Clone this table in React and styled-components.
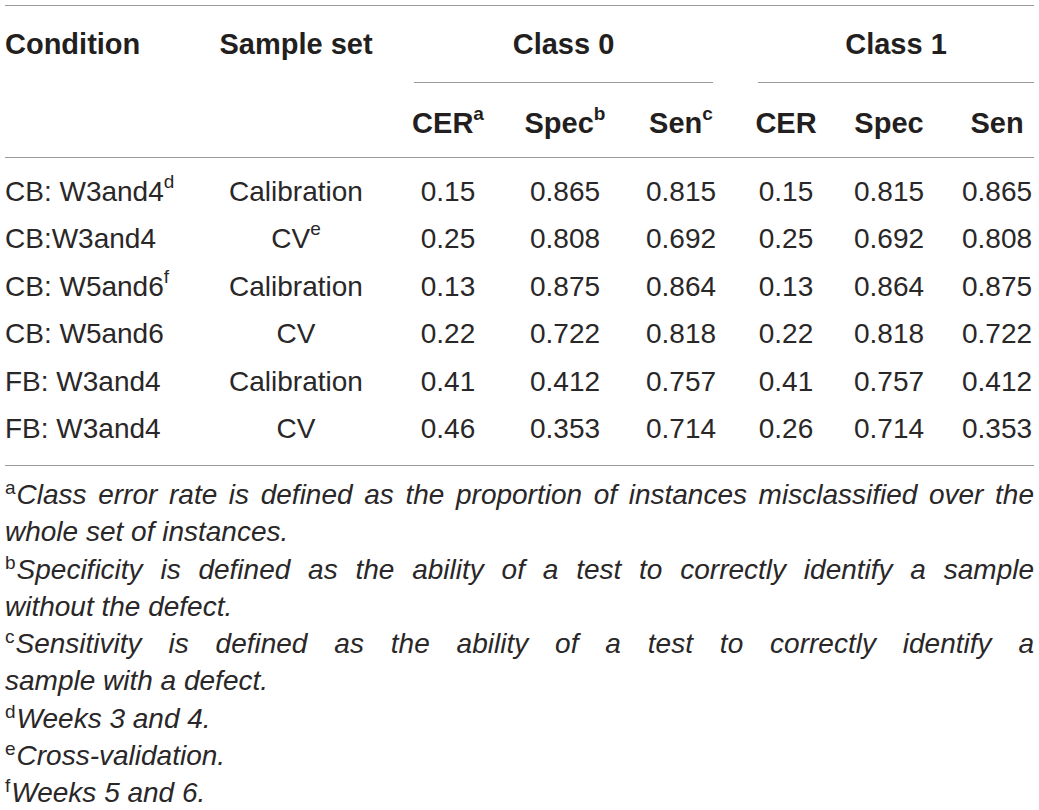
import React from "react";
import styled, { createGlobalStyle } from "styled-components";

const GlobalStyle = createGlobalStyle`
  body {
    margin: 0;
    background: #fff;
  }
`;

const COLUMNS = "195px 192px 112px 122px 110px 100px 106px 92px";
const RULE = "1px solid #9a9a9a";

const rows = [
  ["CB: W3and4", "d", "Calibration", "", "0.15", "0.865", "0.815", "0.15", "0.815", "0.865"],
  ["CB:W3and4", "", "CV", "e", "0.25", "0.808", "0.692", "0.25", "0.692", "0.808"],
  ["CB: W5and6", "f", "Calibration", "", "0.13", "0.875", "0.864", "0.13", "0.864", "0.875"],
  ["CB: W5and6", "", "CV", "", "0.22", "0.722", "0.818", "0.22", "0.818", "0.722"],
  ["FB: W3and4", "", "Calibration", "", "0.41", "0.412", "0.757", "0.41", "0.757", "0.412"],
  ["FB: W3and4", "", "CV", "", "0.46", "0.353", "0.714", "0.26", "0.714", "0.353"],
];

const notes = [
  {
    mark: "a",
    lines: [
      "Class error rate is defined as the proportion of instances misclassified over the",
      "whole set of instances.",
    ],
  },
  {
    mark: "b",
    lines: [
      "Specificity is defined as the ability of a test to correctly identify a sample",
      "without the defect.",
    ],
  },
  {
    mark: "c",
    lines: [
      "Sensitivity is defined as the ability of a test to correctly identify a",
      "sample with a defect.",
    ],
  },
  { mark: "d", lines: ["Weeks 3 and 4."] },
  { mark: "e", lines: ["Cross-validation."] },
  { mark: "f", lines: ["Weeks 5 and 6."] },
];

function App() {
  return (
    <Page>
      <GlobalStyle />
      <Table>
        <Row $h={77}>
          <HeadCell $align="left">Condition</HeadCell>
          <HeadCell>Sample set</HeadCell>
          <GroupHead $left={22} $right={23}>Class 0</GroupHead>
          <GroupHead $left={22} $right={0}>Class 1</GroupHead>
        </Row>
        <SubHead>
          <Row $h={75}>
            <span />
            <span />
            <HeadCell>CER<Sup>a</Sup></HeadCell>
            <HeadCell>Spec<Sup>b</Sup></HeadCell>
            <HeadCell>Sen<Sup>c</Sup></HeadCell>
            <HeadCell>CER</HeadCell>
            <HeadCell>Spec</HeadCell>
            <HeadCell $pl={18}>Sen</HeadCell>
          </Row>
        </SubHead>
        <Body>
          {rows.map((r, i) => (
            <Row key={i} $h={47.5}>
              <Cell $align="left">
                {r[0]}
                {r[1] && <Sup>{r[1]}</Sup>}
              </Cell>
              <Cell>
                {r[2]}
                {r[3] && <Sup>{r[3]}</Sup>}
              </Cell>
              {r.slice(4).map((v, j) => (
                <Cell key={j} $pl={j === 5 ? 18 : 0}>
                  {v}
                </Cell>
              ))}
            </Row>
          ))}
        </Body>
      </Table>

      <Notes>
        {notes.map((n) =>
          n.lines.map((line, i) => (
            <NoteLine key={n.mark + i} $justify={i === 0 && n.lines.length > 1}>
              {i === 0 && <NoteMark>{n.mark}</NoteMark>}
              {line}
            </NoteLine>
          ))
        )}
      </Notes>
    </Page>
  );
}

export default App;

const Page = styled.div`
  width: 1029px;
  padding: 5px 5px 0 5px;
  font-family: "Liberation Sans", Arial, Helvetica, sans-serif;
  color: #231f20;
`;

const Table = styled.div`
  border-top: ${RULE};
  border-bottom: ${RULE};
`;

const Row = styled.div`
  display: grid;
  grid-template-columns: ${COLUMNS};
  height: ${(p) => p.$h}px;
  align-items: center;
`;

const HeadCell = styled.div`
  font-size: 29px;
  font-weight: 700;
  text-align: ${(p) => p.$align || "center"};
  padding-left: ${(p) => p.$pl || 0}px;
  white-space: nowrap;
`;

const GroupHead = styled.div`
  grid-column: span 3;
  align-self: stretch;
  display: flex;
  align-items: center;
  justify-content: center;
  margin: 0 ${(p) => p.$right}px 0 ${(p) => p.$left}px;
  border-bottom: ${RULE};
  font-size: 29px;
  font-weight: 700;
`;

const SubHead = styled.div`
  padding-top: 6px;
  height: 75px;
  box-sizing: border-box;
  display: flex;
  align-items: center;
  border-bottom: ${RULE};

  & > div {
    flex: 1;
  }
`;

const Body = styled.div`
  padding: 10px 0 12px;
`;

const Cell = styled.div`
  font-size: 28px;
  color: #2a2728;
  text-align: ${(p) => p.$align || "center"};
  padding-left: ${(p) => p.$pl || 0}px;
  white-space: nowrap;
`;

const Sup = styled.sup`
  font-size: 19px;
  line-height: 0;
  vertical-align: 13px;
  font-weight: inherit;
`;

const Notes = styled.div`
  padding-top: 10px;
  color: #2a2728;
`;

const NoteLine = styled.div`
  font-size: 28px;
  font-style: italic;
  line-height: 37.3px;
  text-align: ${(p) => (p.$justify ? "justify" : "left")};
  text-align-last: ${(p) => (p.$justify ? "justify" : "auto")};
`;

const NoteMark = styled.span`
  font-style: normal;
  font-size: 19px;
  line-height: 0;
  vertical-align: 10px;
  margin-right: 1px;
`;
